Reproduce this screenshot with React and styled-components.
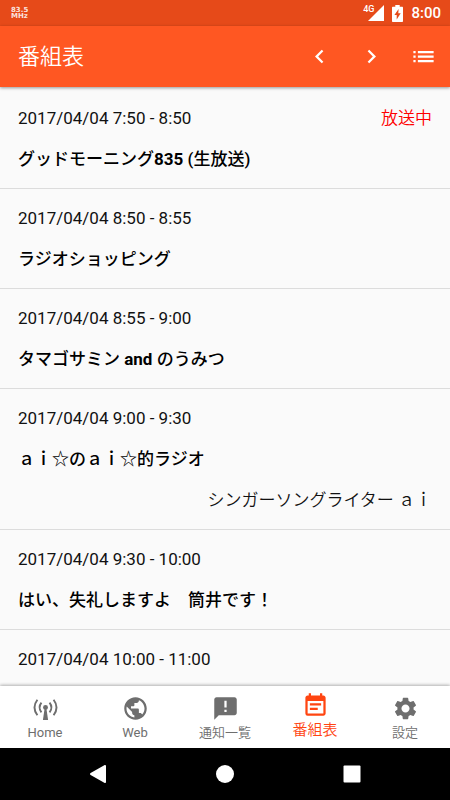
import React from 'react';
import styled, { createGlobalStyle } from 'styled-components';
import {
  MdChevronLeft,
  MdChevronRight,
  MdList,
  MdPublic,
  MdAnnouncement,
  MdEventNote,
  MdSettings,
} from 'react-icons/md';

const GlobalStyle = createGlobalStyle`
  * {
    box-sizing: border-box;
  }

  body {
    margin: 0;
    background-color: #fafafa;
    font-family: Roboto, "Noto Sans CJK JP", sans-serif;
    color: #111;
  }
`;

const Screen = styled.div`
  display: flex;
  flex-direction: column;
  height: 100vh;
  overflow: hidden;
`;

const StatusBar = styled.div`
  display: flex;
  align-items: center;
  justify-content: space-between;
  flex-shrink: 0;
  height: 26px;
  padding: 0 9px 0 11px;
  background-color: #e64a19;
  color: #fff;
`;

const Frequency = styled.div`
  font-family: "DejaVu Sans", sans-serif;
  font-size: 7px;
  font-weight: 700;
  line-height: 6px;
  opacity: 0.85;
`;

const StatusIcons = styled.div`
  display: flex;
  align-items: center;
  gap: 8px;

  svg {
    display: block;
  }
`;

const Network = styled.div`
  display: flex;
  align-items: flex-start;
`;

const NetworkType = styled.span`
  margin-right: -6px;
  font-size: 9px;
  font-weight: 500;
  line-height: 8px;
`;

const Clock = styled.span`
  font-size: 15px;
  font-weight: 500;
  line-height: 26px;
`;

const AppBar = styled.header`
  display: flex;
  align-items: center;
  flex-shrink: 0;
  height: 61px;
  padding: 0 1px 0 18px;
  background-color: #ff5722;
  color: #fff;
  box-shadow: 0 1px 3px rgba(0, 0, 0, 0.4);
  z-index: 1;
`;

const Title = styled.h1`
  flex: 1;
  margin: 0;
  font-size: 22px;
  font-weight: 350;
  line-height: 32px;
`;

const IconButton = styled.button`
  display: flex;
  align-items: center;
  justify-content: center;
  width: 52px;
  height: 52px;
  padding: 0;
  border: none;
  background: none;
  color: inherit;
  font-size: 27px;
  cursor: pointer;
`;

const ProgramList = styled.ul`
  flex: 1;
  min-height: 0;
  margin: 0;
  padding: 2px 0 0;
  overflow: hidden;
  list-style: none;
`;

const ProgramItem = styled.li`
  display: flex;
  flex-direction: column;
  gap: 17px;
  padding: 17px 18px;
  border-bottom: 1px solid #dcdcdc;
  font-size: 17px;
  line-height: 24px;
`;

const ProgramHead = styled.div`
  display: flex;
  justify-content: space-between;
`;

const OnAir = styled.span`
  color: #ff0000;
  font-weight: 350;
`;

const ProgramName = styled.h2`
  margin: 0;
  font-size: inherit;
  font-weight: 500;
  color: #000;
`;

const Personality = styled.p`
  margin: 0;
  font-weight: 350;
  text-align: right;
`;

const BottomNav = styled.nav`
  display: flex;
  flex-shrink: 0;
  height: 62px;
  background-color: #fff;
  box-shadow: 0 -1px 3px rgba(0, 0, 0, 0.3);
  z-index: 1;
`;

const NavLink = styled.a`
  display: flex;
  flex: 1;
  flex-direction: column;
  align-items: center;
  padding-top: ${(props) => (props.$active ? '6px' : '9px')};
  color: ${(props) => (props.$active ? '#ff4511' : '#6e6e6e')};
  font-size: ${(props) => (props.$active ? '15px' : '13px')};
  line-height: 22px;
  text-decoration: none;

  &:lang(ja) {
    font-weight: 350;
  }

  svg {
    display: block;
    width: 27px;
    height: 27px;
  }
`;

const SystemNav = styled.div`
  display: flex;
  align-items: center;
  justify-content: center;
  gap: 75px;
  flex-shrink: 0;
  height: 52px;
  background-color: #000;
`;

const SystemButton = styled.button`
  width: 52px;
  height: 52px;
  padding: 0;
  border: none;
  background: none;
  color: #fff;

  svg {
    display: block;
    margin: 0 auto;
  }
`;

const AntennaIcon = () => (
  <svg viewBox="0 0 24 24" fill="none" stroke="currentColor" strokeWidth="1.7">
    <path d="M4.8 4.2C1.5 8.500 1.500 13.500 4.800 18" />
    <path d="M8.400 6.800C6.300 9.500 6.300 12.700 8.400 15.400" />
    <path d="M19.200 4.200C22.500 8.500 22.500 13.500 19.200 18" />
    <path d="M15.600 6.800C17.700 9.500 17.700 12.700 15.600 15.400" />
    <circle cx="12" cy="11" r="2.200" fill="currentColor" stroke="none" />
    <path d="M11.200 12h1.600l1.500 10.200H9.700z" fill="currentColor" stroke="none" />
  </svg>
);

const SignalIcon = () => (
  <svg width="16" height="16" viewBox="0 0 16 16" fill="currentColor">
    <path d="M0 16 16 0v16z" />
  </svg>
);

const BatteryIcon = () => (
  <svg width="11" height="17" viewBox="0 0 11 17" fill="currentColor">
    <path
      fillRule="evenodd"
      d="M3.300 0h4.400v1.700H10c.6 0 1 .4 1 1V16c0 .6-.4 1-1 1H1c-.6 0-1-.4-1-1V2.700c0-.6.4-1 1-1h2.300zM6.600 4 2.400 10h2.300v4.500L8.700 8.300H6.300z"
    />
  </svg>
);

const programs = [
  {
    time: '2017/04/04 7:50 - 8:50',
    name: <>グッドモーニング<strong>835</strong> (生放送)</>,
    onAir: true,
  },
  { time: '2017/04/04 8:50 - 8:55', name: 'ラジオショッピング' },
  {
    time: '2017/04/04 8:55 - 9:00',
    name: <>タマゴサミン <strong>and</strong> のうみつ</>,
  },
  {
    time: '2017/04/04 9:00 - 9:30',
    name: 'ａｉ☆のａｉ☆的ラジオ',
    personality: 'シンガーソングライター ａｉ',
  },
  { time: '2017/04/04 9:30 - 10:00', name: 'はい、失礼しますよ　筒井です！' },
  { time: '2017/04/04 10:00 - 11:00' },
];

const tabs = [
  { id: 'home', label: 'Home', lang: 'en', Icon: AntennaIcon },
  { id: 'web', label: 'Web', lang: 'en', Icon: MdPublic },
  { id: 'news', label: '通知一覧', lang: 'ja', Icon: MdAnnouncement },
  { id: 'timetable', label: '番組表', lang: 'ja', Icon: MdEventNote },
  { id: 'settings', label: '設定', lang: 'ja', Icon: MdSettings },
];

const App = () => {
  const activeTab = 'timetable';

  return (
    <Screen lang="ja">
      <GlobalStyle />
      <StatusBar>
        <Frequency>
          83.5
          <br />
          MHz
        </Frequency>
        <StatusIcons>
          <Network>
            <NetworkType>4G</NetworkType>
            <SignalIcon />
          </Network>
          <BatteryIcon />
          <Clock>8:00</Clock>
        </StatusIcons>
      </StatusBar>

      <AppBar>
        <Title>番組表</Title>
        <IconButton aria-label="前の日">
          <MdChevronLeft />
        </IconButton>
        <IconButton aria-label="次の日">
          <MdChevronRight />
        </IconButton>
        <IconButton aria-label="一覧">
          <MdList />
        </IconButton>
      </AppBar>

      <ProgramList>
        {programs.map((program) => (
          <ProgramItem key={program.time}>
            <ProgramHead>
              <time>{program.time}</time>
              {program.onAir && <OnAir>放送中</OnAir>}
            </ProgramHead>
            {program.name && <ProgramName>{program.name}</ProgramName>}
            {program.personality && <Personality>{program.personality}</Personality>}
          </ProgramItem>
        ))}
      </ProgramList>

      <BottomNav>
        {tabs.map(({ id, label, lang, Icon }) => (
          <NavLink
            key={id}
            href={`#${id}`}
            lang={lang}
            $active={id === activeTab}
            aria-current={id === activeTab ? 'page' : undefined}
          >
            <Icon />
            {label}
          </NavLink>
        ))}
      </BottomNav>

      <SystemNav>
        <SystemButton aria-label="戻る">
          <svg width="18" height="20" viewBox="0 0 18 20" fill="#fff">
            <path d="M15.300 1.200 1.600 9.100c-.8.500-.8 1.300 0 1.800l13.700 7.900c.8.500 1.700 0 1.700-.9V2.100c0-.9-.9-1.400-1.700-.9z" />
          </svg>
        </SystemButton>
        <SystemButton aria-label="ホーム">
          <svg width="18" height="18" viewBox="0 0 18 18" fill="#fff">
            <circle cx="9" cy="9" r="9" />
          </svg>
        </SystemButton>
        <SystemButton aria-label="最近">
          <svg width="18" height="18" viewBox="0 0 18 18" fill="#fff">
            <rect x="0.500" y="0.500" width="17" height="17" rx="1" />
          </svg>
        </SystemButton>
      </SystemNav>
    </Screen>
  );
};

export default App;
